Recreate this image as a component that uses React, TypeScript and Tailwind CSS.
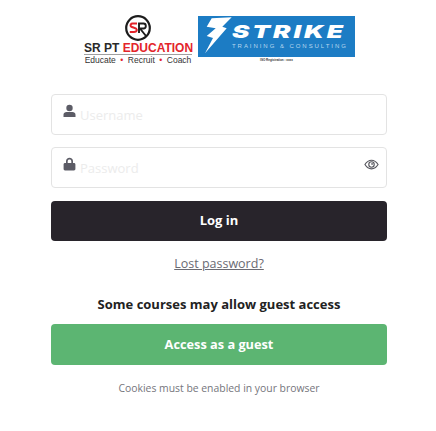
const font = "font-['Open_Sans',sans-serif]";

const SrLogo = () => (
  <div className="flex w-[108px] shrink-0 flex-col items-center">
    <svg width="28" height="28" viewBox="0 0 28 28" fill="none">
      <circle cx="14" cy="14" r="11.8" stroke="#1c1c1c" strokeWidth="2.2" />
      <path d="M13 9.5H8.5C6.8 9.5 6.2 11 6.8 12.2C7.4 13.4 12.5 13.8 12.8 15.6C13 17.2 11.6 18 10 18H5.8" stroke="#e3242b" strokeWidth="2" />
      <path d="M15 19V9.5H19.5C22.6 9.5 22.6 14.5 19.5 14.5H16L22 22" stroke="#1c1c1c" strokeWidth="1.9" />
    </svg>
    <div className="w-full whitespace-nowrap border-b border-[#a0a0a0] text-center font-['Liberation_Sans',sans-serif] text-[12px] leading-[12px] font-bold">
      <span className="text-[#2a2a2a]">SR PT </span>
      <span className="text-[#e3242b]">EDUCATION</span>
    </div>
    <div className="mt-[1px] whitespace-nowrap font-['Liberation_Sans',sans-serif] text-[8.5px] leading-[9px] text-[#333333]">
      Educate<span className="mx-[4.5px] text-[#e3242b]">•</span>Recruit<span className="mx-[4.5px] text-[#e3242b]">•</span>Coach
    </div>
  </div>
);

const StrikeLogo = () => (
  <div className="mt-[2px] ml-[6px] flex w-[157px] shrink-0 flex-col items-center">
    <div className="flex h-[41px] w-full items-center overflow-hidden bg-[#1c7cc4]">
      <svg width="34" height="41" viewBox="0 0 34 41" className="shrink-0">
        <path d="M13.7 2.3L33.7 1.3L24.3 10.7L28.7 12.3L7 37.3L15 22L8.7 20L17.7 12.3L8.7 10.7Z" fill="#ffffff" />
      </svg>
      <div className="flex flex-col">
        <div className="origin-left scale-x-[1.45] font-['Inter',sans-serif] text-[18px] leading-[18px] font-black tracking-[2px] whitespace-nowrap text-white italic">STRIKE</div>
        <div className="mt-[2px] whitespace-nowrap font-['Liberation_Sans',sans-serif] text-[6px] leading-[7px] tracking-[1.95px] text-[#b9d8ee]">TRAINING &amp; CONSULTING</div>
      </div>
    </div>
    <div className="mt-[1px] font-['Liberation_Sans',sans-serif] text-[3px] leading-[4px] font-bold text-[#333333]">ISO Registration : xxxx</div>
  </div>
);

const Field = ({ placeholder, icon, eye }: { placeholder: string; icon: React.ReactNode; eye?: boolean }) => (
  <div className="flex h-[41px] items-start rounded-[4px] border border-[#e3e3e3] bg-white pt-[8px] pr-[7px] pl-[10px]">
    <span className="flex h-[16px] w-[14px] items-center justify-center text-[#5c5c66]">{icon}</span>
    <span className="mt-[3px] ml-[4px] flex-1 text-[13px] leading-[18px] text-[#ececec]">{placeholder}</span>
    {eye && (
      <svg width="15" height="15" viewBox="0 0 16 16" fill="none" stroke="#55555c" strokeWidth="1.2" className="mt-[1px]">
        <path d="M1 8C3 4.8 5.3 3.4 8 3.4S13 4.8 15 8C13 11.2 10.7 12.6 8 12.6S3 11.2 1 8Z" />
        <circle cx="8" cy="8" r="2.9" />
        <circle cx="8.6" cy="7.4" r="0.9" fill="#55555c" stroke="none" />
      </svg>
    )}
  </div>
);

export default function App() {
  return (
    <div className={`${font} h-[431px] w-[436px] overflow-hidden bg-white`}>
      <div className="flex h-[66px] items-start pt-[14px] pl-[84px]">
        <SrLogo />
        <StrikeLogo />
      </div>
      <div className="mt-[28px] mr-[49px] ml-[51px] flex flex-col">
        <Field
          placeholder="Username"
          icon={
            <svg width="13" height="14" viewBox="0 0 13 14" fill="currentColor">
              <circle cx="6.5" cy="4" r="3.2" />
              <path d="M0.5 13V10.8C0.5 9 2 8 3.5 8H9.5C11 8 12.5 9 12.5 10.8V13Z" />
            </svg>
          }
        />
        <div className="mt-[12px]">
          <Field
            eye
            placeholder="Password"
            icon={
              <svg width="13" height="14" viewBox="0 0 13 14" fill="currentColor">
                <path fillRule="evenodd" d="M3 6V4.2C3 2.2 4.5 0.8 6.5 0.8S10 2.2 10 4.2V6H11C11.8 6 12.4 6.6 12.4 7.4V12C12.4 12.8 11.8 13.4 11 13.4H2C1.2 13.4 0.6 12.8 0.6 12V7.4C0.6 6.6 1.2 6 2 6ZM4.7 6H8.3V4.2C8.3 3.2 7.5 2.5 6.5 2.5S4.7 3.2 4.7 4.2Z" />
              </svg>
            }
          />
        </div>
        <button className="mt-[13px] h-[40px] rounded-[4px] bg-[#28242b] text-[13px] font-bold text-white">Log in</button>
        <a className="mt-[14px] self-center text-[12.5px] leading-[18px] text-[#6b6b73] underline">Lost password?</a>
        <p className="mt-[22px] text-center text-[13px] leading-[18px] font-bold text-[#222222]">Some courses may allow guest access</p>
        <button className="mt-[11px] h-[41px] rounded-[4px] bg-[#5cb572] text-[12.75px] font-bold text-white">Access as a guest</button>
        <p className="mt-[15px] text-center text-[10.4px] leading-[16px] text-[#75757c]">Cookies must be enabled in your browser</p>
      </div>
    </div>
  );
}
